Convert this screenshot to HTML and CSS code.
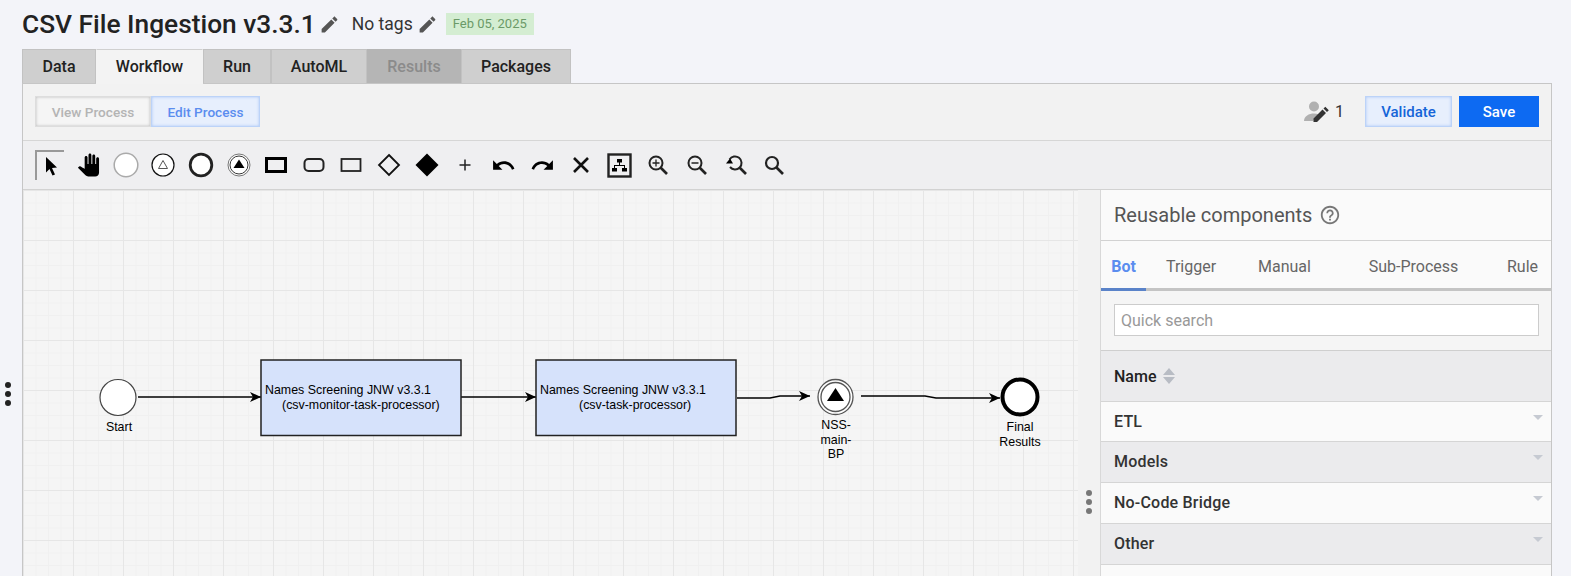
FILE: index.html
```html
<!DOCTYPE html>
<html lang="en">
<head>
    <meta charset="UTF-8">
    <title>CSV File Ingestion v3.3.1</title>
    <link rel="stylesheet" href="styles.css">
</head>
<body>
    <!-- Left splitter -->
    <div class="left-gutter">
        <div class="dots dots-dark"><span></span><span></span><span></span></div>
    </div>

    <div class="page">
        <div class="title-row">
            <h1>CSV File Ingestion v3.3.1</h1>
            <svg class="pencil title-pencil" viewBox="0 0 24 24"><path d="M3 17.25V21h3.75L17.81 9.94l-3.75-3.75L3 17.25zM20.71 7.04c.39-.39.39-1.02 0-1.41l-2.34-2.34c-.39-.39-1.02-.39-1.41 0l-1.83 1.83 3.75 3.75 1.83-1.83z"/></svg>
            <span class="tags">No tags</span>
            <svg class="pencil tags-pencil" viewBox="0 0 24 24"><path d="M3 17.25V21h3.75L17.81 9.94l-3.75-3.75L3 17.25zM20.71 7.04c.39-.39.39-1.02 0-1.41l-2.34-2.34c-.39-.39-1.02-.39-1.41 0l-1.83 1.83 3.75 3.75 1.83-1.83z"/></svg>
            <span class="date-badge">Feb 05, 2025</span>
        </div>

        <div class="tabs">
            <div class="tab tab-data">Data</div>
            <div class="tab tab-workflow active">Workflow</div>
            <div class="tab tab-run">Run</div>
            <div class="tab tab-automl">AutoML</div>
            <div class="tab tab-results disabled">Results</div>
            <div class="tab tab-packages">Packages</div>
        </div>

        <div class="workspace">
            <!-- Mode buttons and save -->
            <div class="action-bar">
                <div class="mode-group">
                    <button class="btn-view">View Process</button>
                    <button class="btn-edit">Edit Process</button>
                </div>
                <div class="actions">
                    <svg class="editors-icon" viewBox="0 0 27 21">
                        <circle cx="10" cy="5.500" r="5" fill="#b0b0b0"/>
                        <path d="M0 20c0-5 5-7.500 10-7.500 1.800 0 3.500.3 5 .9L9 20z" fill="#b0b0b0"/>
                        <path d="M9.500 17.500V21H13l9-9-3.500-3.500zM23 11l1.800-1.800-3.500-3.500L19.500 7.500z" fill="#333"/>
                    </svg>
                    <span class="editors-count">1</span>
                    <button class="btn-validate">Validate</button>
                    <button class="btn-save">Save</button>
                </div>
            </div>

            <!-- Diagram tools -->
            <div class="toolbar">
                <div class="tool tool-selected">
                    <svg width="18" height="20" viewBox="0 0 18 20"><path d="M4 1l11 10.500-5 .5 3 6.500-2.500 1-3-6.500L4 16.500z"/></svg>
                </div>
                <div class="tool">
                    <svg width="23" height="24" viewBox="0 0 24 24"><path d="M23 5.500V20c0 2.200-1.800 4-4 4h-7.300c-1.080 0-2.100-.43-2.850-1.190L1 14.830s1.260-1.230 1.300-1.250c.22-.19.49-.29.79-.29.22 0 .42.06.6.16.04.01 4.310 2.460 4.310 2.460V4c0-.83.67-1.500 1.500-1.500S11 3.170 11 4v7h1V1.500c0-.83.67-1.500 1.500-1.500S15 .67 15 1.500V11h1V2.500c0-.83.67-1.500 1.500-1.500s1.500.67 1.500 1.500V11h1V5.500c0-.83.67-1.500 1.500-1.500s1.500.67 1.500 1.500z"/></svg>
                </div>
                <div class="tool">
                    <svg width="28" height="28" viewBox="0 0 28 28"><circle cx="14" cy="14" r="11.800" fill="#fff" stroke="#aaa" stroke-width="1.500"/></svg>
                </div>
                <div class="tool">
                    <svg width="26" height="26" viewBox="0 0 26 26"><circle cx="13" cy="13" r="11" fill="#fff" stroke="#111" stroke-width="1.200"/><path d="M13 8.500l4.500 8h-9z" fill="none" stroke="#555"/></svg>
                </div>
                <div class="tool">
                    <svg width="28" height="28" viewBox="0 0 28 28"><circle cx="14" cy="14" r="10.800" fill="#fff" stroke="#222" stroke-width="2.800"/></svg>
                </div>
                <div class="tool">
                    <svg width="26" height="26" viewBox="0 0 26 26"><circle cx="13" cy="13" r="11" fill="#fff" stroke="#777"/><circle cx="13" cy="13" r="9" fill="#fff" stroke="#333"/><path d="M13 7.500l5.500 8.500h-11z"/></svg>
                </div>
                <div class="tool">
                    <svg width="24" height="18" viewBox="0 0 24 18"><rect x="2.500" y="2.500" width="19" height="13" fill="none" stroke="#000" stroke-width="3"/></svg>
                </div>
                <div class="tool">
                    <svg width="24" height="18" viewBox="0 0 24 18"><rect x="2.500" y="3" width="19" height="12" rx="4" fill="none" stroke="#222" stroke-width="2"/></svg>
                </div>
                <div class="tool">
                    <svg width="24" height="18" viewBox="0 0 24 18"><rect x="2.500" y="3" width="19" height="12" fill="none" stroke="#222" stroke-width="1.800"/></svg>
                </div>
                <div class="tool">
                    <svg width="26" height="26" viewBox="0 0 26 26"><path d="M13 3l10 10-10 10L3 13z" fill="none" stroke="#111" stroke-width="1.800"/></svg>
                </div>
                <div class="tool">
                    <svg width="26" height="26" viewBox="0 0 26 26"><path d="M13 1.500l11.500 11.500-11.500 11.500L1.500 13z"/></svg>
                </div>
                <div class="tool">
                    <svg width="14" height="14" viewBox="0 0 14 14"><path d="M7 1.500v11M1.500 7h11" stroke="#222" stroke-width="1.500"/></svg>
                </div>
                <div class="tool">
                    <svg width="25" height="25" viewBox="0 0 24 24"><path d="M12.500 8c-2.650 0-5.050.99-6.900 2.600L2 7v9h9l-3.620-3.620c1.390-1.160 3.160-1.880 5.120-1.880 3.540 0 6.550 2.310 7.600 5.500l2.370-.78C21.080 11.030 17.150 8 12.500 8z"/></svg>
                </div>
                <div class="tool">
                    <svg width="25" height="25" viewBox="0 0 24 24"><path d="M18.400 10.600C16.550 8.990 14.150 8 11.500 8c-4.650 0-8.580 3.030-9.960 7.220L3.900 16c1.050-3.190 4.050-5.500 7.600-5.500 1.950 0 3.730.72 5.120 1.880L13 16h9V7l-3.600 3.600z"/></svg>
                </div>
                <div class="tool">
                    <svg width="20" height="20" viewBox="0 0 20 20"><path d="M3 3l14 14M17 3L3 17" stroke="#111" stroke-width="2.600"/></svg>
                </div>
                <div class="tool">
                    <svg width="25" height="25" viewBox="0 0 25 25"><rect x="1.500" y="1.500" width="22" height="22" fill="none" stroke="#222" stroke-width="2.400"/><path d="M10 6h5v3.500h-5zM12 9.500h1V12h5v3h2v3.500h-5V15h2v-2H8v2h2v3.500H5V15h2v-3h5z"/></svg>
                </div>
                <div class="tool">
                    <svg width="22" height="22" viewBox="0 0 22 22"><circle cx="9" cy="9" r="6.500" fill="none" stroke="#222" stroke-width="2"/><path d="M13.500 13.500L20 20" stroke="#222" stroke-width="2.600"/><path d="M9 5.500v7M5.500 9h7" stroke="#222" stroke-width="1.300"/></svg>
                </div>
                <div class="tool">
                    <svg width="22" height="22" viewBox="0 0 22 22"><circle cx="9" cy="9" r="6.500" fill="none" stroke="#222" stroke-width="2"/><path d="M13.500 13.500L20 20" stroke="#222" stroke-width="2.600"/><path d="M5.500 9h7" stroke="#222" stroke-width="1.500"/></svg>
                </div>
                <div class="tool">
                    <svg width="22" height="22" viewBox="0 0 22 22"><path d="M4.500 5.500A6.500 6.500 0 1 1 5 13" fill="none" stroke="#222" stroke-width="2"/><path d="M1 9.500l4-5 3 5z"/><path d="M14.500 13.500L21 20" stroke="#222" stroke-width="2.600"/></svg>
                </div>
                <div class="tool">
                    <svg width="22" height="22" viewBox="0 0 22 22"><circle cx="9" cy="9" r="6" fill="none" stroke="#222" stroke-width="2.200"/><path d="M13.500 13.500L20 20" stroke="#222" stroke-width="2.600"/></svg>
                </div>
            </div>

            <div class="editor">
                <!-- Canvas -->
                <div class="canvas">
                    <svg class="diagram" viewBox="23 190 1055 386" width="1055" height="386">
                        <defs>
                            <marker id="arrow" markerWidth="12" markerHeight="10" refX="11" refY="5" orient="auto" markerUnits="userSpaceOnUse">
                                <path d="M0 0l11 5-11 5 3-5z" fill="#000"/>
                            </marker>
                        </defs>

                        <path class="flow" d="M138 397H261"/>
                        <path class="flow" d="M461 397H536"/>
                        <path class="flow" d="M737 398H770L780 396H810"/>
                        <path class="flow" d="M861 396H925L936 398H1000"/>

                        <circle cx="118" cy="397.500" r="18" fill="#fff" stroke="#444" stroke-width="1.200"/>
                        <text class="label" x="119" y="431" text-anchor="middle">Start</text>

                        <rect class="task" x="261" y="360" width="200" height="75.500"/>
                        <text class="label" x="265" y="394">Names Screening JNW v3.3.1</text>
                        <text class="label" x="282" y="409">(csv-monitor-task-processor)</text>

                        <rect class="task" x="536" y="360" width="200" height="75.500"/>
                        <text class="label" x="540" y="394">Names Screening JNW v3.3.1</text>
                        <text class="label" x="579" y="409">(csv-task-processor)</text>

                        <circle cx="835.500" cy="397" r="17.500" fill="#fff" stroke="#555" stroke-width="1.300"/>
                        <circle cx="835.500" cy="397" r="14.500" fill="#fff" stroke="#555" stroke-width="1.300"/>
                        <path d="M835.500 388l8.500 13h-17z"/>
                        <text class="label" x="836" y="429" text-anchor="middle">NSS-</text>
                        <text class="label" x="836" y="444" text-anchor="middle">main-</text>
                        <text class="label" x="836" y="458" text-anchor="middle">BP</text>

                        <circle cx="1020" cy="397" r="17.500" fill="#fff" stroke="#000" stroke-width="4"/>
                        <text class="label" x="1020" y="431" text-anchor="middle">Final</text>
                        <text class="label" x="1020" y="446" text-anchor="middle">Results</text>
                    </svg>
                </div>

                <div class="panel-gutter">
                    <div class="dots dots-grey"><span></span><span></span><span></span></div>
                </div>

                <!-- Right panel -->
                <div class="panel">
                    <div class="panel-header">
                        <span>Reusable components</span>
                        <svg width="22" height="22" viewBox="0 0 24 24"><path d="M11 18h2v-2h-2v2zm1-16C6.480 2 2 6.480 2 12s4.480 10 10 10 10-4.480 10-10S17.520 2 12 2zm0 18c-4.410 0-8-3.590-8-8s3.590-8 8-8 8 3.590 8 8-3.590 8-8 8zm0-14c-2.210 0-4 1.790-4 4h2c0-1.100.9-2 2-2s2 .9 2 2c0 2-3 1.750-3 5h2c0-2.250 3-2.500 3-5 0-2.210-1.790-4-4-4z"/></svg>
                    </div>
                    <div class="panel-tabs">
                        <div class="panel-tab active">Bot</div>
                        <div class="panel-tab">Trigger</div>
                        <div class="panel-tab">Manual</div>
                        <div class="panel-tab">Sub-Process</div>
                        <div class="panel-tab">Rule</div>
                    </div>
                    <div class="search-row">
                        <input class="search" type="text" placeholder="Quick search">
                    </div>
                    <div class="table-head">
                        <span>Name</span>
                        <div class="sort"><i class="sort-up"></i><i class="sort-down"></i></div>
                    </div>
                    <div class="row row-first"><span>ETL</span><i class="caret"></i></div>
                    <div class="row row-alt"><span>Models</span><i class="caret"></i></div>
                    <div class="row"><span>No-Code Bridge</span><i class="caret"></i></div>
                    <div class="row row-alt"><span>Other</span><i class="caret"></i></div>
                    <div class="row"></div>
                </div>
            </div>
        </div>
    </div>
</body>
</html>
```

FILE: styles.css
```css
/* General */
html, body {
    margin: 0;
    height: 576px;
    overflow: hidden;
}

body {
    display: flex;
    background-color: #f3f4f9;
    font-family: Roboto, "Liberation Sans", sans-serif;
    color: #222;
}

button {
    font-family: inherit;
    cursor: pointer;
}

/* Splitter dots */
.left-gutter {
    flex: none;
    width: 22px;
    padding-top: 382px;
    box-sizing: border-box;
}

.dots {
    display: flex;
    flex-direction: column;
    gap: 3px;
    align-items: center;
}

.dots span {
    width: 6px;
    height: 6px;
    border-radius: 50%;
}

.dots-dark {
    width: 16px;
}

.dots-dark span {
    background: #222;
}

.dots-grey span {
    background: #777;
}

.page {
    flex: none;
    width: 1530px;
}

/* Title row */
.title-row {
    display: flex;
    align-items: center;
    height: 49px;
    box-sizing: border-box;
    padding-bottom: 1px;
}

h1 {
    margin: 0;
    font-size: 26.300px;
    font-weight: 500;
    color: #222;
}

.pencil {
    width: 21px;
    height: 21px;
    fill: #555;
}

.title-pencil {
    margin-left: 3px;
}

.tags {
    margin-left: 12px;
    font-size: 17.500px;
    color: #333;
}

.tags-pencil {
    margin-left: 4px;
}

.date-badge {
    margin-left: 8px;
    padding: 0 7px;
    height: 22px;
    line-height: 22px;
    background: #d4edd2;
    color: #6b9a68;
    font-size: 13px;
}

/* Main tabs */
.tabs {
    display: flex;
    height: 34px;
}

.tab {
    box-sizing: border-box;
    height: 34px;
    line-height: 34px;
    text-align: center;
    font-size: 16px;
    font-weight: 500;
    background: #cfcfcf;
    border: 1px solid #c2c2c2;
    border-bottom: none;
    color: #222;
}

.tab-data { width: 74px; }
.tab-workflow { width: 107px; }
.tab-run { width: 68px; }
.tab-automl { width: 96px; }
.tab-results { width: 94px; }
.tab-packages { width: 110px; }

.tab.active {
    position: relative;
    z-index: 1;
    background: #f3f3f3;
    height: 35px;
    border-color: #f3f3f3;
    border-top-color: #d0d0d0;
}

.tab.disabled {
    background: #b5b5b5;
    border-color: #b5b5b5;
    color: #8b8b8b;
}

/* Workspace */
.workspace {
    border: 1px solid #c6c6c6;
    border-bottom: none;
    box-sizing: border-box;
    background: #f2f2f2;
}

.action-bar {
    display: flex;
    justify-content: space-between;
    align-items: center;
    height: 57px;
    padding: 0 12px 1px;
    border-bottom: 1px solid #d6d6d6;
    box-sizing: border-box;
}

.mode-group {
    display: flex;
}

.mode-group button {
    height: 31px;
    font-size: 13.600px;
    font-weight: 500;
    padding: 0;
}

.btn-view {
    width: 116px;
    background: #f5f5f5;
    color: #b4b4b4;
    border: 1px solid #ddd;
    box-shadow: inset 0 0 3px #bbb;
}

.btn-edit {
    width: 109px;
    background: #e7effd;
    color: #5b8def;
    border: 1px solid #bcd3f8;
    box-shadow: inset 0 0 3px #a9c6f6;
}

.actions {
    display: flex;
    align-items: center;
}

.editors-icon {
    width: 27px;
    height: 21px;
}

.editors-count {
    margin-left: 4px;
    margin-right: 21px;
    font-size: 16px;
    color: #333;
}

.btn-validate {
    width: 87px;
    height: 31px;
    font-size: 15px;
    font-weight: 500;
    background: #e7effd;
    color: #1565d8;
    border: 1px solid #bcd3f8;
    box-shadow: inset 0 0 3px #a9c6f6;
    margin-right: 7px;
}

.btn-save {
    width: 80px;
    height: 31px;
    font-size: 15px;
    font-weight: 500;
    background: #0d6af2;
    color: #fff;
    border: none;
}

/* Icon toolbar */
.toolbar {
    display: flex;
    align-items: center;
    height: 49px;
    padding-left: 8px;
    background: #efeff1;
    border-bottom: 1px solid #d2d2d2;
    box-sizing: border-box;
}

.tool {
    flex: none;
    width: 37.600px;
    height: 30px;
    display: flex;
    align-items: center;
    justify-content: center;
    box-sizing: border-box;
}

.tool:nth-child(n+12) {
    width: 38.700px;
}

.tool-selected {
    width: 29px;
    margin-left: 4px;
    margin-right: 5.500px;
    border-top: 2px solid #999;
    border-left: 2px solid #999;
}

/* Editor area */
.editor {
    display: flex;
    height: 386px;
    overflow: hidden;
}

.canvas {
    flex: none;
    width: 1055px;
    background-color: #f5f5f5;
    background-image:
        linear-gradient(#e6e6e6 1px, transparent 1px),
        linear-gradient(90deg, #e6e6e6 1px, transparent 1px),
        linear-gradient(#f0f0f0 1px, transparent 1px),
        linear-gradient(90deg, #f0f0f0 1px, transparent 1px);
    background-size: 50px 50px, 50px 50px, 12.500px 12.500px, 12.500px 12.500px;
}

.diagram {
    display: block;
}

.flow {
    fill: none;
    stroke: #000;
    stroke-width: 1.300;
    marker-end: url(#arrow);
}

.task {
    fill: #d6e2fb;
    stroke: #222;
    stroke-width: 1.500;
}

.label {
    font-family: "Liberation Sans", Arial, sans-serif;
    font-size: 12.400px;
    fill: #000;
}

.panel-gutter {
    flex: none;
    width: 22px;
    padding-top: 300px;
    box-sizing: border-box;
    background: #f2f2f2;
}

/* Right panel */
.panel {
    flex: none;
    width: 451px;
    box-sizing: border-box;
    background: #f5f5f5;
    border-left: 1px solid #d8d8d8;
}

.panel-header {
    display: flex;
    align-items: center;
    gap: 7px;
    height: 51px;
    padding-left: 13px;
    box-sizing: border-box;
    background: #fafafa;
    border-bottom: 1px solid #d2d2d2;
    font-size: 20px;
    color: #555;
}

.panel-header svg {
    fill: #777;
}

.panel-tabs {
    display: grid;
    grid-template-columns: 45px 90px 97px 161px 57px;
    height: 50px;
    box-sizing: border-box;
    background: #fafafa;
    border-bottom: 3px solid #c4c4c4;
}

.panel-tab {
    height: 50px;
    box-sizing: border-box;
    line-height: 52px;
    text-align: center;
    font-size: 16px;
    color: #666;
}

.panel-tab.active {
    color: #5b8def;
    font-weight: 700;
    border-bottom: 3px solid #5a83c9;
}

.search-row {
    height: 60px;
    padding: 13px 12px 0 13px;
    box-sizing: border-box;
    border-bottom: 1px solid #cfcfcf;
}

.search {
    display: block;
    width: 100%;
    height: 32px;
    box-sizing: border-box;
    border: 1px solid #ccc;
    background: #fff;
    padding: 0 6px;
    font-family: inherit;
    font-size: 16px;
}

.search::placeholder {
    color: #999;
}

.table-head {
    display: flex;
    align-items: center;
    gap: 7px;
    height: 51px;
    padding-left: 13px;
    box-sizing: border-box;
    background: #ebebed;
    border-bottom: 1px solid #d5d5d5;
    font-size: 16px;
    font-weight: 500;
    color: #222;
}

.sort {
    display: flex;
    flex-direction: column;
    gap: 2px;
}

.sort i {
    display: block;
    width: 0;
    height: 0;
    border-left: 6px solid transparent;
    border-right: 6px solid transparent;
}

.sort-up {
    border-bottom: 7px solid #b8bcc4;
}

.sort-down {
    border-top: 7px solid #b8bcc4;
}

.row {
    display: flex;
    justify-content: space-between;
    height: 41px;
    padding: 0 8px 0 13px;
    box-sizing: border-box;
    background: #fafafa;
    border-bottom: 1px solid #d5d5d5;
    font-size: 16px;
    letter-spacing: 0.2px;
    font-weight: 500;
    color: #333;
    line-height: 40px;
}

.row-first {
    height: 40px;
}

.row-alt {
    background: #ebebed;
}

.caret {
    margin-top: 13px;
    width: 0;
    height: 0;
    border-left: 5px solid transparent;
    border-right: 5px solid transparent;
    border-top: 5px solid #c6cad2;
}
```
